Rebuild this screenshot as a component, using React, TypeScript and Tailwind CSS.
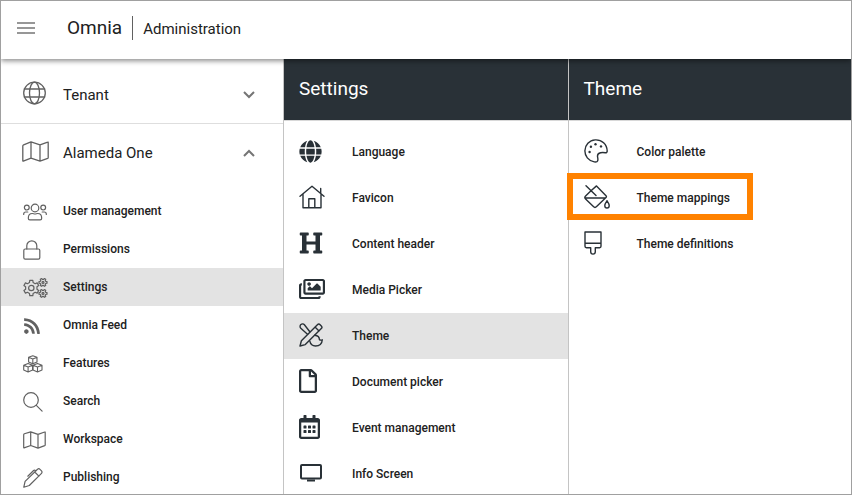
import type { ReactNode } from "react";
import { FaGlobe, FaHeading, FaRegCalendarAlt, FaRegFile, FaRegImages, FaRss } from "react-icons/fa";

type Item = { label: string; icon: ReactNode };

function Line({ w, h, width = 1.2, children }: { w: number; h: number; width?: number; children: ReactNode }) {
  return (
    <svg
      width={w}
      height={h}
      viewBox={`0 0 ${w} ${h}`}
      fill="none"
      stroke="currentColor"
      strokeWidth={width}
      strokeLinecap="round"
      strokeLinejoin="round"
      aria-hidden="true"
    >
      {children}
    </svg>
  );
}

function gear(cx: number, cy: number, outer: number, inner: number, teeth: number, turn = 0) {
  const points: string[] = [];
  const step = (Math.PI * 2) / teeth;
  for (let i = 0; i < teeth; i++) {
    const a = i * step + turn;
    const corners: [number, number][] = [
      [-0.3, inner],
      [-0.19, outer],
      [0.19, outer],
      [0.3, inner],
    ];
    for (const [offset, r] of corners) {
      const t = a + offset * step;
      points.push(`${(cx + r * Math.cos(t)).toFixed(2)} ${(cy + r * Math.sin(t)).toFixed(2)}`);
    }
  }
  return `M${points.join("L")}Z`;
}

const globe = (
  <Line w={24} h={24} width={1.3}>
    <circle cx="12.5" cy="12" r="10.8" />
    <ellipse cx="12.5" cy="12" rx="5" ry="10.8" />
    <path d="M2.3 8h20.4M2.3 16h20.4" />
  </Line>
);

const largeMap = (
  <Line w={27} h={21} width={1.3}>
    <path d="M.8 5v14.8q0 .5.5.3L9 17.2l9 3 7.7-2.8q.5-.2.5-.7V1.5q0-.6-.5-.4L18 3.9 9 .9 1.6 3.8q-.8.3-.8 1.2M9 .9v16.3M18 3.9v16.3" />
  </Line>
);

const tenantItems: Item[] = [
  {
    label: "User management",
    icon: (
      <Line w={24} h={18}>
        <circle cx="12" cy="5" r="3.8" />
        <circle cx="3.8" cy="4.6" r="2.4" />
        <circle cx="20.2" cy="4.6" r="2.4" />
        <path d="M5.3 15.3c0-3 1.6-4.8 4-4.8 1.1 0 1.6.5 2.7.5s1.6-.5 2.7-.5c2.4 0 4 1.8 4 4.8 0 .9-.6 1.6-1.500 1.600H6.800c-.9 0-1.500-.7-1.500-1.600ZM.7 11.500V11c0-1.200.9-2 2.100-2h2M23.300 11.500V11c0-1.200-.9-2-2.100-2h-2" />
      </Line>
    ),
  },
  {
    label: "Permissions",
    icon: (
      <Line w={18} h={20}>
        <rect x=".8" y="9" width="16" height="10.2" rx="1.4" />
        <path d="M3.800 9V5.800a5 5 0 0 1 10 0V9" />
      </Line>
    ),
  },
  {
    label: "Settings",
    icon: (
      <Line w={25} h={20} width={1.2}>
        <path d={gear(8.3, 10, 7.8, 5.8, 6, Math.PI / 6)} />
        <circle cx="8.3" cy="10" r="2.7" />
        <path d={gear(20, 4.4, 4.1, 3, 6)} />
        <circle cx="20" cy="4.4" r="1" />
        <path d={gear(20, 15.4, 4.1, 3, 6)} />
        <circle cx="20" cy="15.4" r="1" />
      </Line>
    ),
  },
  { label: "Omnia Feed", icon: <FaRss size={18} aria-hidden="true" /> },
  {
    label: "Features",
    icon: (
      <Line w={20} h={18} width={1.1}>
        <path d="m9.800.7 4.200 1.600v4.600L9.800 8.700 5.600 6.900V2.300ZM5.600 2.300l4.200 1.800L14 2.300M9.800 4.100v4.600" />
        <path d="m5.100 8.400 4.500 1.800v4.900L5.100 17 .7 15.100v-4.900ZM.7 10.200l4.400 1.900 4.500-1.900M5.100 12.100V17" />
        <path d="m14.500 8.400 4.500 1.800v4.900L14.500 17 10 15.100v-4.900ZM10 10.200l4.500 1.900 4.500-1.900M14.500 12.100V17" />
      </Line>
    ),
  },
  {
    label: "Search",
    icon: (
      <Line w={20} h={20}>
        <circle cx="8" cy="8" r="7.3" />
        <path d="m13.300 13.300 5.800 5.800" />
      </Line>
    ),
  },
  {
    label: "Workspace",
    icon: (
      <Line w={23} h={18}>
        <path d="M.7 3.800v12.800q0 .4.400.3L7.700 14.500l7.300 2.600 6.700-2.500q.5-.2.500-.6V1.300q0-.5-.5-.3L15 3.400 7.700.9 1.400 2.800q-.7.3-.7 1M7.700.9v13.600M15 3.400v13.700" />
      </Line>
    ),
  },
  {
    label: "Publishing",
    icon: (
      <Line w={20} h={20}>
        <path d="m13.500 2.200 1-.9c.7-.7 1.800-.7 2.500 0l1.500 1.500c.7.7.7 1.800 0 2.500l-1 1L6.300 17.500.8 19.200l1.300-5.800ZM11.700 4l4.200 4.200M4.800 8.200l5.800-5.700c.6-.6 1.200-.6 1.800 0l.4.400" />
      </Line>
    ),
  },
];

const settingsItems: Item[] = [
  { label: "Language", icon: <FaGlobe size={23} aria-hidden="true" /> },
  {
    label: "Favicon",
    icon: (
      <Line w={26} h={24} width={1.4}>
        <path d="M1 11.300 13 1.200l12 10.100M4 9v13.800h18V9M9.800 22.800v-9h6v9M21.700 8.200V3.500" />
      </Line>
    ),
  },
  { label: "Content header", icon: <FaHeading size={24} aria-hidden="true" /> },
  { label: "Media Picker", icon: <FaRegImages size={26} aria-hidden="true" /> },
  {
    label: "Theme",
    icon: (
      <Line w={24} h={24} width={1.4}>
        <path d="M18.400 1.700c.8-.8 1.900-.8 2.700 0l1.200 1.200c.8.8.8 1.900 0 2.700L6.300 21.600 1 23l1.400-5.300ZM16 4l4 4" />
        <path d="M10.800 8.700 5.400 1.800C4.500.7 3 .6 1.900 1.600.8 2.600.8 4.300 1.800 5.200L8.500 11.200M15.800 12.300c2.900.3 4.600 1.900 4.600 4.300.9.700 1.800.7 2.900.2-.3 4-3 6.200-6.800 6.200-3.100 0-5-1.600-5.700-4.800" />
      </Line>
    ),
  },
  { label: "Document picker", icon: <FaRegFile size={24} className="w-[18px]" aria-hidden="true" /> },
  { label: "Event management", icon: <FaRegCalendarAlt size={24} className="w-[21px]" aria-hidden="true" /> },
  {
    label: "Info Screen",
    icon: (
      <Line w={24} h={18} width={2}>
        <rect x="2" y="1" width="20" height="13.5" rx="1" />
        <path d="M9 16.500h6" strokeLinecap="square" />
      </Line>
    ),
  },
];

const themeItems: Item[] = [
  {
    label: "Color palette",
    icon: (
      <Line w={24} h={24} width={1.4}>
        <path d="M11.200.9C17.800.5 23 5.500 23.200 12c0 1.300-.7 1.800-1.900 1.700-1.500-.2-3.100-.3-4.700 0-2.300.5-3.400 2.200-3 4.300.2 1.300.6 2.300.1 3.700-.4 1.200-1.700 1.500-3.400 1.200C4.300 21.700.8 17 .9 11.800 1 6 5.300 1.300 11.200.9Z" />
        <g fill="currentColor" stroke="none">
          <circle cx="5.600" cy="13" r="1.2" />
          <circle cx="6.900" cy="7.7" r="1.2" />
          <circle cx="11.500" cy="5.2" r="1.2" />
          <circle cx="17" cy="7.4" r="1.2" />
        </g>
      </Line>
    ),
  },
  {
    label: "Theme mappings",
    icon: (
      <Line w={26} h={24} width={1.4}>
        <path d="m2 .8 10 9.800M7 5.700 12.500.9 22 10.700c.6.6.600 1.200 0 1.800l-9.400 9.100c-1 1-2.200 1-3.200 0L1.600 14c-1-1-1-2.100 0-3.100L7 5.700M1.200 13h20.300" />
        <path d="M23 15.700c1.200 1.800 2.200 3.200 2.200 4.700 0 1.600-1 2.600-2.200 2.600s-2.200-1-2.200-2.600c0-1.500 1-2.900 2.200-4.700Z" />
      </Line>
    ),
  },
  {
    label: "Theme definitions",
    icon: (
      <Line w={18} h={24} width={1.4}>
        <path d="M1 1h16v14.300c0 .8-.6 1.400-1.400 1.400h-4.300v4.100a2.300 2.300 0 0 1-4.600 0v-4.100H2.400c-.8 0-1.400-.6-1.400-1.400ZM1 12.300h16" />
      </Line>
    ),
  },
];

function Chevron({ up = false }: { up?: boolean }) {
  return (
    <Line w={12} h={8} width={2}>
      <path d={up ? "m1 7 5-5 5 5" : "m1 1 5 5 5-5"} strokeLinecap="butt" strokeLinejoin="miter" />
    </Line>
  );
}

function Section({ label, icon, open = false }: { label: string; icon: ReactNode; open?: boolean }) {
  return (
    <button type="button" aria-expanded={open} className="flex w-full items-center pr-7 text-left">
      <span className="flex w-[62px] shrink-0 pl-[21px] text-[#616161]">{icon}</span>
      <span className="grow pt-1 text-[15px] leading-5">{label}</span>
      <span className="pt-1 text-[#757575]">
        <Chevron up={open} />
      </span>
    </button>
  );
}

function Panel({ title, items, active }: { title: string; items: Item[]; active?: string }) {
  return (
    <section className="min-w-0 flex-1 border-l border-[#c4c4c4] bg-white">
      <h2 className="flex h-[61px] items-center bg-[#293137] pb-[2px] pl-[15px] text-[19px] leading-6 text-white">
        {title}
      </h2>
      <ul className="border-t border-[#d8d8d8] pt-2">
        {items.map((item) => (
          <li key={item.label}>
            <a
              href="#"
              className={`flex h-[46px] items-center text-[12px] font-medium leading-4 ${item.label === active ? "bg-[#e3e3e3]" : ""}`}
            >
              <span className="flex w-[68px] shrink-0 pb-[2px] pl-[15px] text-[#293137]">{item.icon}</span>
              {item.label}
            </a>
          </li>
        ))}
      </ul>
    </section>
  );
}

export default function App() {
  return (
    <div className="flex h-screen flex-col overflow-hidden border border-[#a0a0a0] bg-white font-['Roboto',sans-serif] text-[#212121]">
      <header className="relative z-10 flex h-[58px] shrink-0 items-center bg-white pb-1 pl-4 shadow-[0_2px_5px_rgba(0,0,0,0.45)]">
        <button type="button" aria-label="Menu" className="text-[#757575]">
          <Line w={18} h={12} width={1.5}>
            <path d="M0 1h18M0 6h18M0 11h18" strokeLinecap="butt" />
          </Line>
        </button>
        <h1 className="ml-8 flex items-center">
          <span className="pr-[10px] text-[19px] leading-6">Omnia</span>
          <span className="flex h-6 items-center border-l border-[#616161] pl-[10px] pt-[2px] text-[15px] leading-5">
            Administration
          </span>
        </h1>
      </header>
      <div className="flex min-h-0 grow">
        <nav aria-label="Administration" className="w-[282px] shrink-0">
          <div className="flex h-[65px] border-b border-[#dedede] pt-[3px]">
            <Section label="Tenant" icon={globe} />
          </div>
          <div className="flex h-[58px] pb-1">
            <Section label="Alameda One" icon={largeMap} open />
          </div>
          <ul className="pt-[10px]">
            {tenantItems.map((item) => (
              <li key={item.label}>
                <a
                  href="#"
                  className={`flex h-[38px] items-center text-[12px] font-medium leading-4 ${item.label === "Settings" ? "bg-[#e3e3e3]" : ""}`}
                >
                  <span className="flex w-[62px] shrink-0 pl-[22px] pt-[2px] text-[#616161]">{item.icon}</span>
                  {item.label}
                </a>
              </li>
            ))}
          </ul>
        </nav>
        <Panel title="Settings" items={settingsItems} active="Theme" />
        <div className="relative flex min-w-0 flex-1">
          <Panel title="Theme" items={themeItems} />
          <div
            aria-hidden="true"
            className="pointer-events-none absolute -left-px top-[114px] h-[47px] w-[186px] border-6 border-[#ff8200]"
          />
        </div>
      </div>
    </div>
  );
}
